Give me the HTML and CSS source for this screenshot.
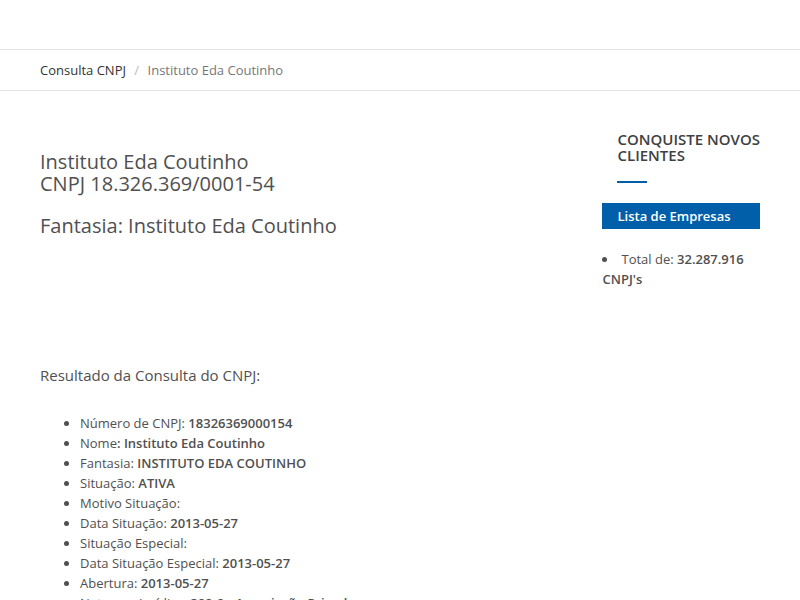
FILE: index.html
```html
<!DOCTYPE html>
<html lang="pt-BR">
<head>
<meta charset="utf-8">
<meta name="viewport" content="width=device-width, initial-scale=1">
<title>Instituto Eda Coutinho</title>
<link rel="stylesheet" href="styles.css">
</head>
<body>
<header class="topbar"></header>
<nav class="crumbs" aria-label="Trilha">
  <a href="#">Consulta CNPJ</a>
  <span class="crumb-sep">/</span>
  <span>Instituto Eda Coutinho</span>
</nav>
<div class="layout">
  <main class="content">
    <h1 class="title">Instituto Eda Coutinho<br>CNPJ 18.326.369/0001-54</h1>
    <h2 class="title">Fantasia: Instituto Eda Coutinho</h2>
    <section class="result">
      <h3 class="result-title">Resultado da Consulta do CNPJ:</h3>
      <ul class="facts">
        <li>Número de CNPJ: <b>18326369000154</b></li>
        <li>Nome<b>: Instituto Eda Coutinho</b></li>
        <li>Fantasia: <b>INSTITUTO EDA COUTINHO</b></li>
        <li>Situação: <b>ATIVA</b></li>
        <li>Motivo Situação:</li>
        <li>Data Situação: <b>2013-05-27</b></li>
        <li>Situação Especial:</li>
        <li>Data Situação Especial: <b>2013-05-27</b></li>
        <li>Abertura: <b>2013-05-27</b></li>
        <li>Natureza Jurídica: <b>399-9 - Associação Privada</b></li>
      </ul>
    </section>
  </main>
  <aside class="sidebar">
    <h4 class="side-title">CONQUISTE NOVOS<br>CLIENTES</h4>
    <a class="side-button" href="#">Lista de Empresas</a>
    <ul class="side-list">
      <li>Total de: <b>32.287.916 CNPJ's</b></li>
    </ul>
  </aside>
</div>
</body>
</html>
```
FILE: styles.css
```css
* {
  box-sizing: border-box;
}

body {
  margin: 0;
  background: #fff;
  color: #505050;
  font: 400 13px/20px "Open Sans", sans-serif;
}

b {
  font-weight: 600;
}

.topbar {
  height: 49px;
}

.crumbs {
  padding: 10px 40px;
  border-top: 1px solid #e5e5e5;
  border-bottom: 1px solid #e5e5e5;
  color: #777;
}

.crumbs a {
  color: #333;
  text-decoration: none;
}

.crumb-sep {
  padding: 0 5px;
  color: #bbb;
}

.layout {
  display: flex;
  justify-content: space-between;
  gap: 40px;
  padding: 40px;
}

.content {
  flex: 1;
  padding-top: 20px;
}

.title {
  margin: 0 0 20px;
  font-size: 20px;
  line-height: 22px;
  font-weight: 400;
}

.result {
  margin-top: 130px;
}

.result-title {
  margin: 0 0 30px;
  font-size: 15px;
  line-height: 16px;
  font-weight: 400;
}

.facts {
  margin: 0;
  padding-left: 40px;
}

.sidebar {
  flex: 0 0 157px;
}

.side-title {
  margin: 0 0 20px;
  padding-left: 15px;
  color: #404040;
  font-size: 15px;
  line-height: 16px;
  font-weight: 600;
  white-space: nowrap;
}

.side-title::after {
  content: "";
  display: block;
  width: 30px;
  height: 2px;
  margin-top: 18px;
  background: #005fa8;
}

.side-button {
  display: block;
  padding: 3px 15px;
  background: #005fa8;
  color: #fff;
  font-weight: 600;
  text-decoration: none;
}

.side-list {
  margin: 20px 0 0;
  padding: 0;
  list-style-position: inside;
}
```
